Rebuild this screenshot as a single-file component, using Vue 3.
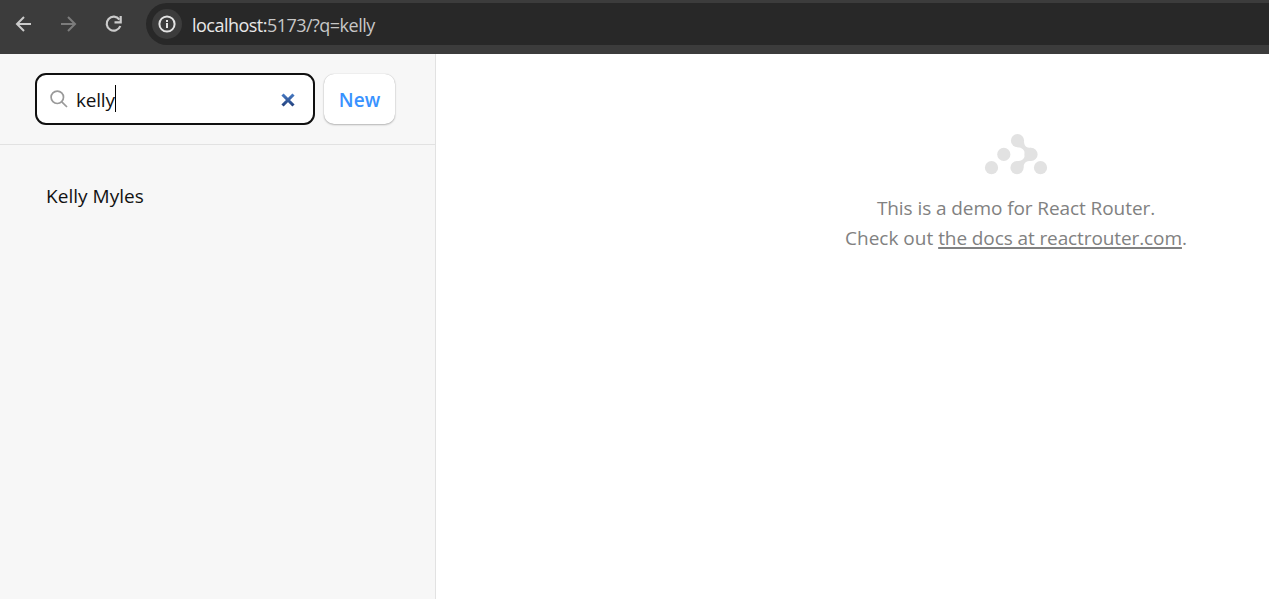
<script setup>
import { ref } from 'vue'

const query = ref('kelly')
const contacts = ['Kelly Myles']
</script>

<template>
  <div class="window">
    <header class="toolbar">
      <svg class="nav" width="140" height="48" viewBox="0 0 140 48" fill="none" stroke-width="2">
        <path d="M31 24H17.5M24 17l-7 7 7 7" stroke="#cbcbcb" />
        <path d="M61 24h13.5M68 17l7 7-7 7" stroke="#7c7c7c" />
        <path d="M119.4 19.6A7 7 0 1 0 120.3 26" stroke="#cbcbcb" stroke-width="2.2" />
        <path d="M120.7 16v6.3H114.5" stroke="#cbcbcb" stroke-width="2.2" />
      </svg>
      <div class="address">
        <span class="info">
          <svg width="20" height="20" viewBox="0 0 20 20" fill="none" stroke="#e3e3e3" stroke-width="2">
            <circle cx="10" cy="10" r="7.6" />
            <path d="M10 9v5M10 6v2" />
          </svg>
        </span>
        <span class="url"><b>localhost:</b>5173/?q=kelly</span>
      </div>
    </header>
    <div class="page">
      <aside>
        <div class="search-row">
          <div class="search">
            <svg width="18" height="18" viewBox="0 0 18 18" fill="none" stroke="#999" stroke-width="1.7">
              <circle cx="7.3" cy="7.3" r="6.2" />
              <path d="M11.8 11.8l5.2 5.2" />
            </svg>
            <span class="query">{{ query }}</span><i class="caret"></i>
            <svg class="clear" width="14" height="14" viewBox="0 0 14 14" fill="none">
              <defs>
                <linearGradient id="cross" x1="0" y1="0" x2="0" y2="14" gradientUnits="userSpaceOnUse">
                  <stop stop-color="#4a7fc9" /><stop offset="1" stop-color="#203c78" />
                </linearGradient>
              </defs>
              <path d="M1.5 1.5l11 11M12.5 1.5l-11 11" stroke="url(#cross)" stroke-width="3.1" />
            </svg>
          </div>
          <button>New</button>
        </div>
        <nav><a v-for="name in contacts" :key="name">{{ name }}</a></nav>
      </aside>
      <main>
        <svg class="logo" width="64" height="42" viewBox="0 0 64 42" fill="#e2e2e2">
          <circle cx="7.5" cy="33.7" r="6.6" />
          <circle cx="19.8" cy="20.4" r="6.6" />
          <circle cx="33.5" cy="6.7" r="6.6" />
          <circle cx="47" cy="20.4" r="6.6" />
          <circle cx="33" cy="33.7" r="6.6" />
          <circle cx="56.5" cy="33.7" r="6.6" />
          <path d="M40 6.7C40 11.7 42 13.7 47 13.8V27C42 27 39.6 28.7 39.6 33.7L33 27.1C37.5 26.9 40.9 24.7 40.9 20.4C40.9 16 38 13.5 33.5 13.3Z" />
        </svg>
        <p class="intro">This is a demo for React Router.</p>
        <p class="docs">Check out <a>the docs at reactrouter.com</a>.</p>
      </main>
    </div>
  </div>
</template>

<style>
body { background: #fff; }
</style>

<style scoped>
* { box-sizing: border-box; }
.window { height: 599px; display: flex; flex-direction: column; overflow: hidden; font-family: "Open Sans", "Noto Sans", sans-serif; font-size: 19px; color: #121212; }
.toolbar { height: 54px; flex: none; display: flex; background: #3c3c3c; padding-top: 3px; }
.nav { margin-top: -3px; flex: none; }
.address { margin-left: 6px; width: 1180px; height: 42px; flex: none; border-radius: 21px; background: #282828; display: flex; align-items: center; padding-left: 6px; }
.info { width: 30px; height: 30px; border-radius: 50%; background: #3c3c3c; display: flex; align-items: center; justify-content: center; }
.url { margin-left: 10px; padding-top: 1px; font-size: 18px; line-height: 30px; color: #c7c7c7; letter-spacing: -0.52px; white-space: nowrap; }
.url b { font-weight: 400; color: #e8e8e8; }
.page { flex: 1; display: flex; min-height: 0; }
aside { width: 436px; flex: none; background: #f7f7f7; border-right: 1px solid #e2e2e2; }
.search-row { height: 91px; border-bottom: 1px solid #e2e2e2; padding: 19px 0 0 35px; display: flex; gap: 9px; }
.search { width: 280px; height: 52px; border: 2px solid #101010; border-radius: 11px; background: #fff; display: flex; align-items: center; padding: 0 18px 0 13px; }
.query { margin-left: 8px; padding-top: 2px; line-height: 30px; letter-spacing: -0.2px; }
.caret { width: 1px; height: 27px; background: #000; margin-top: -2px; }
.clear { margin-left: auto; margin-top: 2px; }
button { width: 71px; height: 50px; margin-top: 1px; border: 0; padding: 2px 0 0; border-radius: 10px; background: #fff; box-shadow: 0 0 1px rgba(0, 0, 0, 0.25), 0 1px 2px rgba(0, 0, 0, 0.25); font: 600 19px/30px "Open Sans", sans-serif; color: #3992ff; }
nav { padding: 36px 0 0 46px; }
nav a { display: block; line-height: 30px; letter-spacing: 0.04px; }
main { flex: 0 0 1160px; display: flex; flex-direction: column; align-items: center; padding-top: 80px; color: #818181; }
.logo { margin-bottom: 17px; }
p { margin: 0; line-height: 30px; white-space: nowrap; }
.intro { letter-spacing: -0.08px; }
main a { letter-spacing: -0.1px; text-decoration: underline; text-decoration-thickness: 2px; text-underline-offset: 2px; text-decoration-skip-ink: none; }
</style>
